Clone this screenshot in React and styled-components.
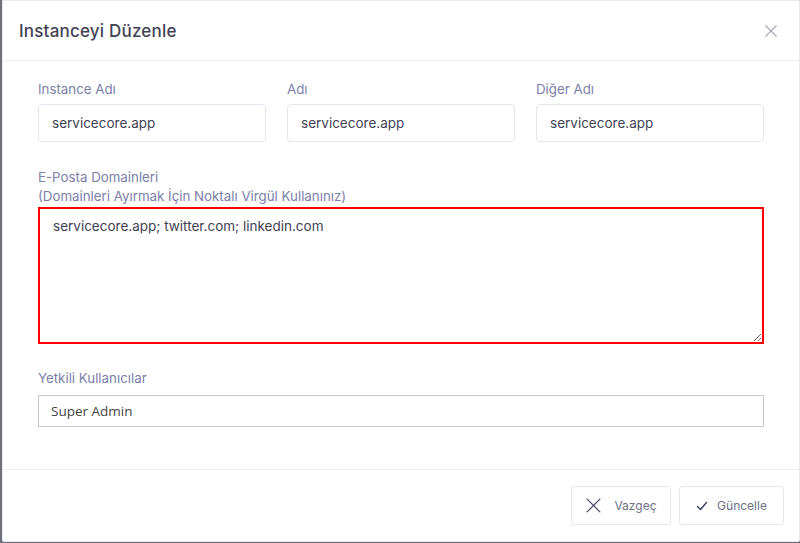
import React from "react";
import styled, { createGlobalStyle } from "styled-components";

const GlobalStyle = createGlobalStyle`
  html, body {
    margin: 0;
    padding: 0;
    background: #6f7079;
  }
  * {
    box-sizing: border-box;
  }
`;

const Backdrop = styled.div`
  width: 800px;
  height: 543px;
  padding: 0 0 0 2px;
  background: #6f7079;
  font-family: "Inter", "Noto Sans", sans-serif;
`;

const Modal = styled.div`
  width: 798px;
  height: 542px;
  background: #fff;
  border: 1px solid #e9eaf0;
  border-radius: 0 0 2px 2px;
  display: flex;
  flex-direction: column;
`;

const Header = styled.div`
  height: 60px;
  display: flex;
  align-items: center;
  justify-content: space-between;
  padding: 0 21px 0 16px;
  border-bottom: 1px solid #ebedf3;
`;

const Title = styled.h3`
  margin: 0;
  font-size: 17px;
  font-weight: 500;
  color: #3f4254;
  letter-spacing: 0.2px;
`;

const CloseButton = styled.button`
  border: none;
  background: none;
  padding: 0;
  display: flex;
  color: #a1a5b7;
  cursor: pointer;
`;

const Body = styled.div`
  flex: 1;
  padding: 19px 35px 0 35px;
  display: flex;
  flex-direction: column;
`;

const Row = styled.div`
  display: grid;
  grid-template-columns: repeat(3, minmax(0, 1fr));
  column-gap: 21px;
`;

const Field = styled.div`
  display: flex;
  flex-direction: column;
  min-width: 0;
  margin-top: ${({ top }) => top || 0}px;
`;

const Label = styled.label`
  font-size: 13.3px;
  line-height: 19px;
  color: #7b80a8;
  margin-bottom: ${({ gap }) => (gap === undefined ? 5 : gap)}px;
`;

const Input = styled.input`
  width: 100%;
  min-width: 0;
  height: 38px;
  border: 1px solid #e4e6ef;
  border-radius: 4px;
  padding: 0 13px;
  font-family: inherit;
  font-size: 13.5px;
  color: #3f4254;
  outline: none;
`;

const TextArea = styled.textarea`
  height: 137px;
  border: 2px solid #ff0000;
  border-radius: 0;
  padding: 7px 13px;
  font-family: inherit;
  font-size: 13.5px;
  line-height: 20px;
  color: #3f4254;
  outline: none;
  resize: vertical;
`;

const SelectBox = styled.div`
  height: 32px;
  border: 1px solid #c8c8cc;
  display: flex;
  align-items: center;
  padding: 0 12px;
  font-family: "Open Sans", sans-serif;
  font-size: 13.5px;
  color: #444;
`;

const Footer = styled.div`
  height: 72px;
  border-top: 1px solid #ebedf3;
  display: flex;
  align-items: center;
  justify-content: flex-end;
  gap: 8px;
  padding: 0 15px 0 0;
`;

const Button = styled.button`
  height: 39px;
  width: ${({ w }) => w}px;
  display: flex;
  align-items: center;
  justify-content: center;
  gap: ${({ gap }) => gap}px;
  background: #fff;
  border: 1px solid #e4e6ef;
  border-radius: 3px;
  font-family: inherit;
  font-size: 12px;
  color: #6c7088;
  cursor: pointer;
  svg {
    flex-shrink: 0;
  }
`;

const CloseIcon = ({ size = 14, stroke = 1.3, color = "currentColor" }) => (
  <svg width={size} height={size} viewBox="0 0 16 16" fill="none">
    <path d="M2 2L14 14M14 2L2 14" stroke={color} strokeWidth={stroke} strokeLinecap="round" />
  </svg>
);

const CheckIcon = () => (
  <svg width="12" height="12" viewBox="0 0 12 12" fill="none">
    <path d="M1.5 6.5L4.5 9.5L10.5 2.5" stroke="#3b4064" strokeWidth="1.4" strokeLinecap="round" strokeLinejoin="round" />
  </svg>
);

const nameFields = [
  { label: "Instance Adı", value: "servicecore.app" },
  { label: "Adı", value: "servicecore.app" },
  { label: "Diğer Adı", value: "servicecore.app" },
];

export default function App() {
  return (
    <Backdrop>
      <GlobalStyle />
      <Modal>
        <Header>
          <Title>Instanceyi Düzenle</Title>
          <CloseButton>
            <CloseIcon size={14} stroke={1.3} color="#a3a6b6" />
          </CloseButton>
        </Header>
        <Body>
          <Row>
            {nameFields.map((item, index) => (
              <Field key={index}>
                <Label>{item.label}</Label>
                <Input defaultValue={item.value} />
              </Field>
            ))}
          </Row>
          <Field top={26}>
            <Label gap={1}>
              E-Posta Domainleri
              <br />
              (Domainleri Ayırmak İçin Noktalı Virgül Kullanınız)
            </Label>
            <TextArea defaultValue="servicecore.app; twitter.com; linkedin.com" />
          </Field>
          <Field top={25}>
            <Label gap={7}>Yetkili Kullanıcılar</Label>
            <SelectBox>Super Admin</SelectBox>
          </Field>
        </Body>
        <Footer>
          <Button w={100} gap={12}>
            <CloseIcon size={17} stroke={1.2} color="#4a4f6a" />
            Vazgeç
          </Button>
          <Button w={105} gap={9}>
            <CheckIcon />
            Güncelle
          </Button>
        </Footer>
      </Modal>
    </Backdrop>
  );
}
